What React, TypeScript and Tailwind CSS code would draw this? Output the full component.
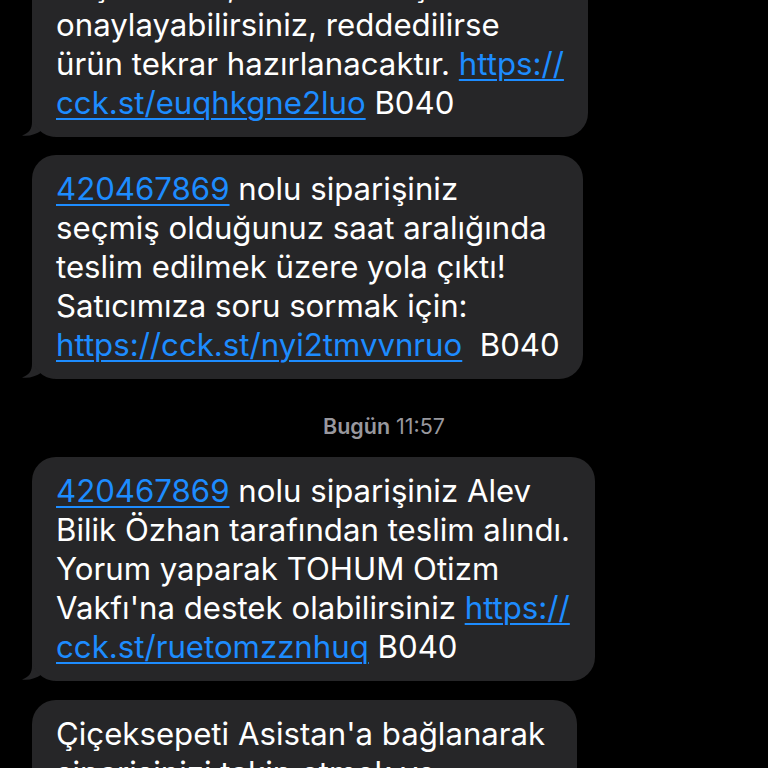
import React from 'react';

const LINK = 'text-[#1d8cff] underline decoration-[2px] underline-offset-[4px]';

function Tail() {
  return (
    <svg
      className="absolute left-[-10px] bottom-0"
      width="32"
      height="27"
      viewBox="0 0 32 27"
    >
      <path
        d="M10 0 L10 12 C10 19 7 23 0 25.5 C7 26.5 14 24.5 19.5 20.5 C23 24 27 26 32 26.5 L32 0 Z"
        fill="#262628"
      />
    </svg>
  );
}

interface BubbleProps {
  width: string;
  tail?: boolean;
  extra?: string;
  children: React.ReactNode;
}

function Bubble({ width, tail = true, extra = '', children }: BubbleProps) {
  return (
    <div className={`relative ml-[32px] ${width} ${extra}`}>
      {tail && <Tail />}
      <div className="relative rounded-[24px] bg-[#262628] pl-[24px] pr-[16px] py-[14.5px] text-[31.2px] leading-[39px] text-white whitespace-nowrap">
        {children}
      </div>
    </div>
  );
}

export default function App() {
  return (
    <div
      className="h-[768px] w-[768px] overflow-hidden bg-black"
      style={{ fontFamily: 'Inter, "Noto Sans", sans-serif' }}
    >
      <div className="flex flex-col">
        <Bubble width="w-[556px]" extra="mt-[-48px]">
          <div>Teşekkürler, ürününüzü şimdi</div>
          <div>onaylayabilirsiniz, reddedilirse</div>
          <div>
            ürün tekrar hazırlanacaktır. <span className={LINK}>https://</span>
          </div>
          <div>
            <span className={LINK}>cck.st/euqhkgne2luo</span> B040
          </div>
        </Bubble>

        <Bubble width="w-[551px]" extra="mt-[18px]">
          <div>
            <span className={LINK}>420467869</span> nolu siparişiniz
          </div>
          <div>seçmiş olduğunuz saat aralığında</div>
          <div>teslim edilmek üzere yola çıktı!</div>
          <div>Satıcımıza soru sormak için:</div>
          <div>
            <span className={LINK}>https://cck.st/nyi2tmvvnruo</span>&nbsp; B040
          </div>
        </Bubble>

        <div className="flex h-[78px] items-center justify-center pt-[16px] text-[21.5px] text-[#98989e]">
          <span className="font-semibold">Bugün</span>
          <span className="ml-[6px]">11:57</span>
        </div>

        <Bubble width="w-[563px]">
          <div>
            <span className={LINK}>420467869</span> nolu siparişiniz Alev
          </div>
          <div>Bilik Özhan tarafından teslim alındı.</div>
          <div>Yorum yaparak TOHUM Otizm</div>
          <div>
            Vakfı'na destek olabilirsiniz <span className={LINK}>https://</span>
          </div>
          <div>
            <span className={LINK}>cck.st/ruetomzznhuq</span> B040
          </div>
        </Bubble>

        <Bubble width="w-[545px]" tail={false} extra="mt-[19px]">
          <div>Çiçeksepeti Asistan'a bağlanarak</div>
          <div>siparişinizi takip etmek ve</div>
          <div>sorularınızı iletmek için</div>
        </Bubble>
      </div>
    </div>
  );
}
